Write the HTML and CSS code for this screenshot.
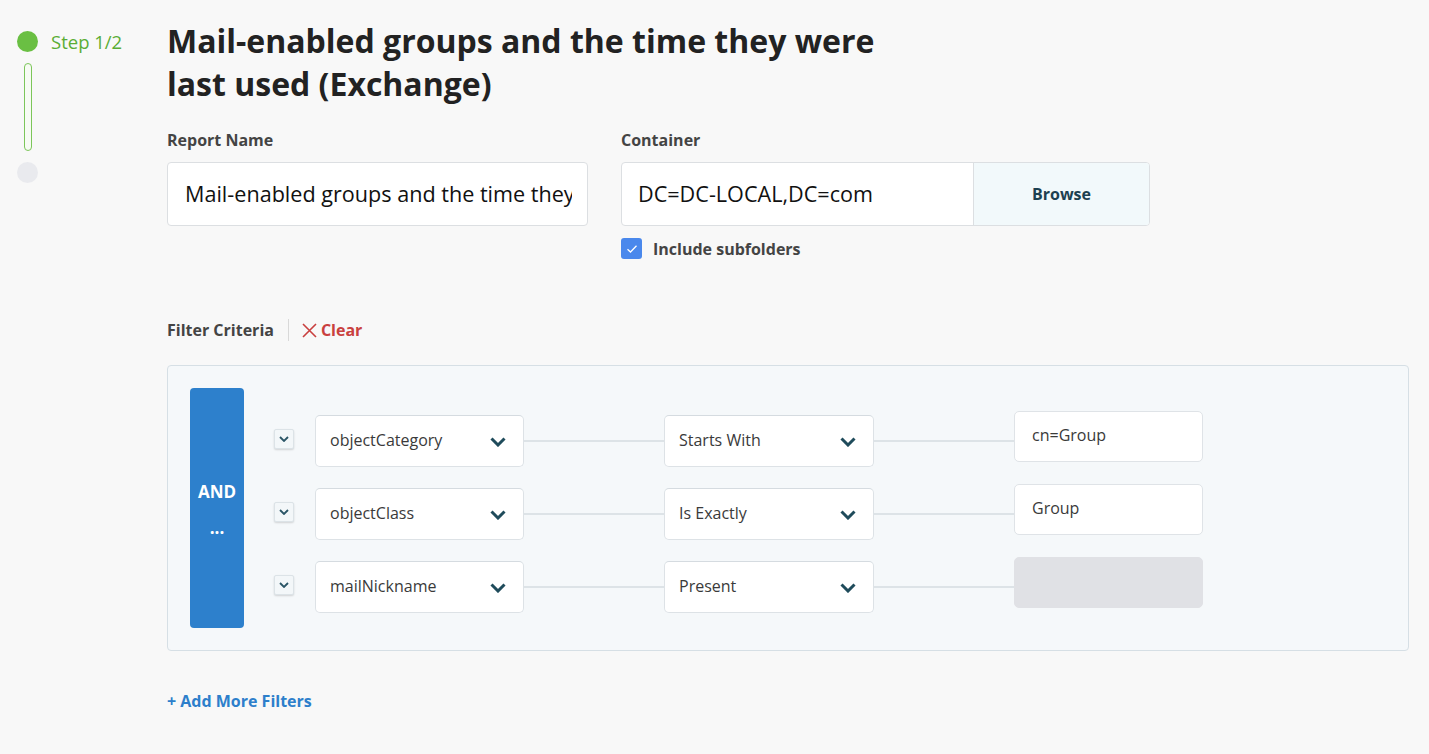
FILE: index.html
```html
<!DOCTYPE html>
<html lang="en">
<head>
<meta charset="utf-8">
<title>Report</title>
<link rel="stylesheet" href="styles.css">
</head>
<body>
<div class="page">
  <aside class="stepper">
    <div class="step-row">
      <span class="dot dot-active"></span>
      <span class="step-label">Step 1/2</span>
    </div>
    <div class="bar"></div>
    <span class="dot dot-idle"></span>
  </aside>
  <main class="main">
    <h1 class="title">Mail-enabled groups and the time they were last used (Exchange)</h1>
    <div class="form-row">
      <div class="field field-name">
        <div class="label">Report Name</div>
        <div class="input"><span class="input-text">Mail-enabled groups and the time they were last used (Exchange)</span></div>
      </div>
      <div class="field field-container">
        <div class="label">Container</div>
        <div class="combo">
          <div class="combo-input">DC=DC-LOCAL,DC=com</div>
          <div class="browse">Browse</div>
        </div>
        <div class="check-row">
          <span class="checkbox">
            <svg width="12" height="10" viewBox="0 0 12 10"><path d="M1.5 5.2 L4.5 8 L10.5 1.8" fill="none" stroke="#fff" stroke-width="1.3"/></svg>
          </span>
          <span class="check-label">Include subfolders</span>
        </div>
      </div>
    </div>

    <div class="filter-head">
      <span class="filter-title">Filter Criteria</span>
      <span class="sep"></span>
      <span class="clear">
        <svg width="15" height="15" viewBox="0 0 15 15"><path d="M1 1 L14 14 M14 1 L1 14" stroke="#c9403f" stroke-width="1.6" fill="none"/></svg>
        Clear
      </span>
    </div>

    <div class="panel">
      <div class="and-block">
        <span>AND</span>
        <span>...</span>
      </div>
      <div class="rows">
        <div class="row">
          <span class="mini-btn"><svg width="10" height="6" viewBox="0 0 10 6"><path d="M1 1 L5 5 L9 1" fill="none" stroke="#2a5566" stroke-width="1.8"/></svg></span>
          <div class="select select-attr"><span>objectCategory</span><svg class="chev" width="16" height="10" viewBox="0 0 16 10"><path d="M1.5 1.5 L8 8 L14.5 1.5" fill="none" stroke="#1f4b5b" stroke-width="3"/></svg></div>
          <span class="line"></span>
          <div class="select select-op"><span>Starts With</span><svg class="chev" width="16" height="10" viewBox="0 0 16 10"><path d="M1.5 1.5 L8 8 L14.5 1.5" fill="none" stroke="#1f4b5b" stroke-width="3"/></svg></div>
          <span class="line"></span>
          <div class="value">cn=Group</div>
        </div>
        <div class="row">
          <span class="mini-btn"><svg width="10" height="6" viewBox="0 0 10 6"><path d="M1 1 L5 5 L9 1" fill="none" stroke="#2a5566" stroke-width="1.8"/></svg></span>
          <div class="select select-attr"><span>objectClass</span><svg class="chev" width="16" height="10" viewBox="0 0 16 10"><path d="M1.5 1.5 L8 8 L14.5 1.5" fill="none" stroke="#1f4b5b" stroke-width="3"/></svg></div>
          <span class="line"></span>
          <div class="select select-op"><span>Is Exactly</span><svg class="chev" width="16" height="10" viewBox="0 0 16 10"><path d="M1.5 1.5 L8 8 L14.5 1.5" fill="none" stroke="#1f4b5b" stroke-width="3"/></svg></div>
          <span class="line"></span>
          <div class="value">Group</div>
        </div>
        <div class="row">
          <span class="mini-btn"><svg width="10" height="6" viewBox="0 0 10 6"><path d="M1 1 L5 5 L9 1" fill="none" stroke="#2a5566" stroke-width="1.8"/></svg></span>
          <div class="select select-attr"><span>mailNickname</span><svg class="chev" width="16" height="10" viewBox="0 0 16 10"><path d="M1.5 1.5 L8 8 L14.5 1.5" fill="none" stroke="#1f4b5b" stroke-width="3"/></svg></div>
          <span class="line"></span>
          <div class="select select-op"><span>Present</span><svg class="chev" width="16" height="10" viewBox="0 0 16 10"><path d="M1.5 1.5 L8 8 L14.5 1.5" fill="none" stroke="#1f4b5b" stroke-width="3"/></svg></div>
          <span class="line"></span>
          <div class="value value-disabled"></div>
        </div>
      </div>
    </div>

    <div class="add-more">+ Add More Filters</div>
  </main>
</div>
</body>
</html>
```

FILE: styles.css
```css
* { box-sizing: border-box; }

html, body {
  margin: 0;
  background: #f8f8f8;
  font-family: "Open Sans", "Noto Sans", sans-serif;
  color: #333;
}

.page {
  display: flex;
  min-height: 754px;
}

/* Stepper */
.stepper {
  width: 167px;
  flex: none;
  padding: 31px 0 0 17px;
  display: flex;
  flex-direction: column;
  align-items: flex-start;
}

.step-row {
  display: flex;
  align-items: center;
  height: 21px;
}

.dot {
  width: 21px;
  height: 21px;
  border-radius: 50%;
  display: block;
  flex: none;
}

.dot-active { background: #6abf43; }
.dot-idle { background: #e9eaee; margin-top: 11px; }

.step-label {
  margin-left: 13px;
  font-size: 18.5px;
  color: #5aad35;
  line-height: 21px;
}

.bar {
  width: 8px;
  height: 88px;
  margin: 11px 0 0 7px;
  border: 1px solid #7cc65a;
  border-radius: 4px;
  background: #f7fbf4;
}

/* Main */
.main {
  flex: 1;
  padding-top: 19px;
  padding-right: 20px;
}

.title {
  margin: 0;
  font-size: 32px;
  line-height: 43px;
  font-weight: 700;
  color: #222;
  max-width: 730px;
}

.form-row {
  display: flex;
  gap: 33px;
  margin-top: 25px;
}

.label {
  font-size: 16px;
  font-weight: 700;
  line-height: 20px;
  color: #444;
  margin-bottom: 12px;
}

.field-name { width: 421px; }

.input {
  height: 64px;
  background: #fff;
  border: 1px solid #dcdfe2;
  border-radius: 4px;
  padding: 0 15px 0 17px;
  display: flex;
  align-items: center;
}

.input-text {
  display: block;
  width: 100%;
  font-size: 21.6px;
  line-height: 30px;
  color: #111;
  white-space: nowrap;
  overflow: hidden;
}

.combo {
  display: flex;
  width: 529px;
  height: 64px;
  border: 1px solid #dcdfe2;
  border-radius: 4px;
  overflow: hidden;
  background: #fff;
}

.combo-input {
  width: 351px;
  padding-left: 16px;
  font-size: 21.6px;
  line-height: 62px;
  color: #111;
}

.browse {
  flex: 1;
  background: #f2f9fb;
  border-left: 1px solid #dcdfe2;
  display: flex;
  align-items: center;
  justify-content: center;
  font-size: 16px;
  font-weight: 700;
  color: #1d4050;
}

.check-row {
  display: flex;
  align-items: center;
  margin-top: 12px;
  height: 21px;
}

.checkbox {
  width: 21px;
  height: 21px;
  border-radius: 3px;
  background: #4a88ec;
  display: flex;
  align-items: center;
  justify-content: center;
}

.check-label {
  margin-left: 11px;
  font-size: 16px;
  font-weight: 700;
  color: #444;
}

/* Filter header */
.filter-head {
  display: flex;
  align-items: center;
  margin-top: 59px;
  height: 24px;
}

.filter-title {
  font-size: 16px;
  font-weight: 700;
  color: #444;
}

.sep {
  width: 1px;
  height: 22px;
  background: #d9d9d9;
  margin: 0 13px 0 14px;
}

.clear {
  display: flex;
  align-items: center;
  gap: 4px;
  font-size: 16px;
  font-weight: 700;
  color: #c9403f;
}

/* Panel */
.panel {
  margin-top: 23px;
  width: 1242px;
  border: 1px solid #d6dfe5;
  border-radius: 4px;
  background: #f5f8fa;
  padding: 22px;
  display: flex;
}

.and-block {
  width: 54px;
  height: 240px;
  background: #2d80cc;
  border-radius: 4px;
  color: #fff;
  font-weight: 700;
  font-size: 17px;
  line-height: 36px;
  padding-top: 4px;
  display: flex;
  flex-direction: column;
  align-items: center;
  justify-content: center;
}

.rows {
  margin-left: 30px;
  padding-top: 27px;
  display: flex;
  flex-direction: column;
  gap: 21px;
}

.row {
  display: flex;
  align-items: center;
  height: 52px;
}

.mini-btn {
  width: 20px;
  height: 20px;
  margin-right: 21px;
  margin-bottom: 4px;
  background: #f3f7f9;
  border: 1px solid #dce3e7;
  border-radius: 2px;
  box-shadow: 0 1px 2px rgba(0, 0, 0, 0.15);
  display: flex;
  align-items: center;
  justify-content: center;
}

.select {
  height: 52px;
  background: #fff;
  border: 1px solid #dde2e6;
  border-top-color: #d5dbe0;
  border-radius: 5px;
  display: flex;
  align-items: center;
  justify-content: space-between;
  padding: 0 17px 0 14px;
  font-size: 16px;
  color: #3a3a3a;
}

.select span { margin-top: -2px; }

.select-attr { width: 209px; }
.select-op { width: 210px; }

.chev { flex: none; margin-top: 2px; }

.line {
  width: 140px;
  height: 2px;
  background: #dde3e7;
}

.value {
  width: 189px;
  height: 51px;
  margin: -10px 0 0;
  background: #fff;
  border: 1px solid #dfe3e7;
  border-radius: 5px;
  padding-left: 17px;
  font-size: 16px;
  line-height: 47px;
  color: #3a3a3a;
}

.value-disabled {
  background: #e0e1e5;
  border-color: #e0e1e5;
}

.add-more {
  margin-top: 38px;
  font-size: 16px;
  font-weight: 700;
  line-height: 24px;
  color: #2d7fcb;
}
```
